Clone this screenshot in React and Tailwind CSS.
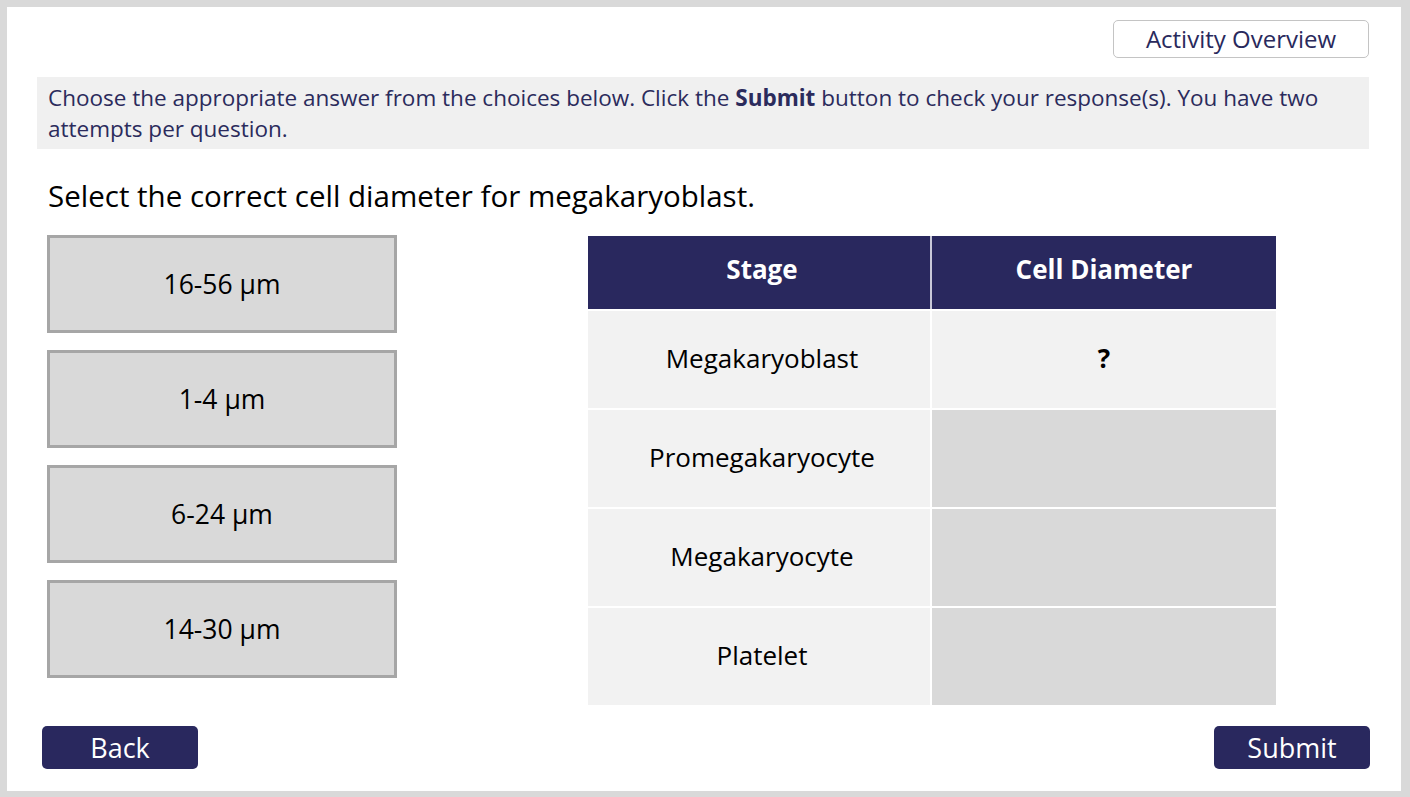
import React, { useState } from "react";

const options = ["16-56 μm", "1-4 μm", "6-24 μm", "14-30 μm"];

const rows = [
  { stage: "Megakaryoblast", diameter: "?" },
  { stage: "Promegakaryocyte", diameter: null },
  { stage: "Megakaryocyte", diameter: null },
  { stage: "Platelet", diameter: null },
];

export default function App() {
  const [selected, setSelected] = useState(null);

  return (
    <div
      className="w-full h-[797px] bg-[#d9d9d9] pl-[7px] pt-[7px] pr-[9px] pb-[6px]"
      style={{ fontFamily: '"Open Sans", "Noto Sans", sans-serif' }}
    >
      <div className="h-full bg-white flex flex-col">
        {/* Top bar */}
        <div className="flex justify-end pt-[13px] pr-[32px]">
          <button className="w-[256px] h-[38px] border border-[#c4c4c4] rounded-[5px] bg-white text-[24px] leading-none text-[#29295c]">
            Activity Overview
          </button>
        </div>

        {/* Instructions */}
        <div className="mt-[19px] ml-[30px] mr-[32px] h-[72px] bg-[#f0f0f0] pl-[11px] pr-4 pt-[5px] text-[22.5px] leading-[31px] text-[#2b2b5c]">
          Choose the appropriate answer from the choices below. Click the{" "}
          <span className="font-bold">Submit</span> button to check your
          response(s). You have two attempts per question.
        </div>

        {/* Question */}
        <div className="mt-[28px] ml-[41px] text-[29.5px] leading-[38px] text-black">
          Select the correct cell diameter for megakaryoblast.
        </div>

        {/* Main */}
        <div className="mt-[20px] flex">
          <div className="ml-[40px] w-[350px] flex flex-col gap-[17.5px]">
            {options.map((opt, i) => (
              <button
                key={i}
                onClick={() => setSelected(i)}
                className="h-[97.5px] w-full border-[3px] border-[#a6a6a6] bg-[#d9d9d9] pt-[3px] text-[26.5px] text-black flex items-center justify-center"
              >
                {opt}
              </button>
            ))}
          </div>

          <div className="ml-[191px] w-[688px] mt-[1px]">
            <div className="grid grid-cols-2 h-[73px] bg-[#29285e] text-white text-[26px] font-bold">
              <div className="flex items-center justify-center pb-[6px] pl-[6px] border-r-2 border-[#c8c8d8]">
                Stage
              </div>
              <div className="flex items-center justify-center pb-[6px]">
                Cell Diameter
              </div>
            </div>
            {rows.map((row, i) => (
              <div
                key={i}
                className="grid grid-cols-2 h-[99px] border-t-2 border-white"
              >
                <div className="bg-[#f2f2f2] border-r-2 border-white flex items-center justify-center pb-[2px] pl-[6px] text-[26px] text-black">
                  {row.stage}
                </div>
                <div
                  className={
                    row.diameter
                      ? "bg-[#f2f2f2] flex items-center justify-center pb-[2px] text-[26px] font-bold text-black"
                      : "bg-[#d9d9d9]"
                  }
                >
                  {row.diameter}
                </div>
              </div>
            ))}
          </div>
        </div>

        {/* Footer */}
        <div className="mt-auto mb-[22px] flex justify-between pl-[35px] pr-[31px]">
          <button className="w-[156px] h-[43px] rounded-[5px] bg-[#29285e] text-white text-[27px] leading-none">
            Back
          </button>
          <button className="w-[156px] h-[43px] rounded-[5px] bg-[#29285e] text-white text-[27px] leading-none">
            Submit
          </button>
        </div>
      </div>
    </div>
  );
}
